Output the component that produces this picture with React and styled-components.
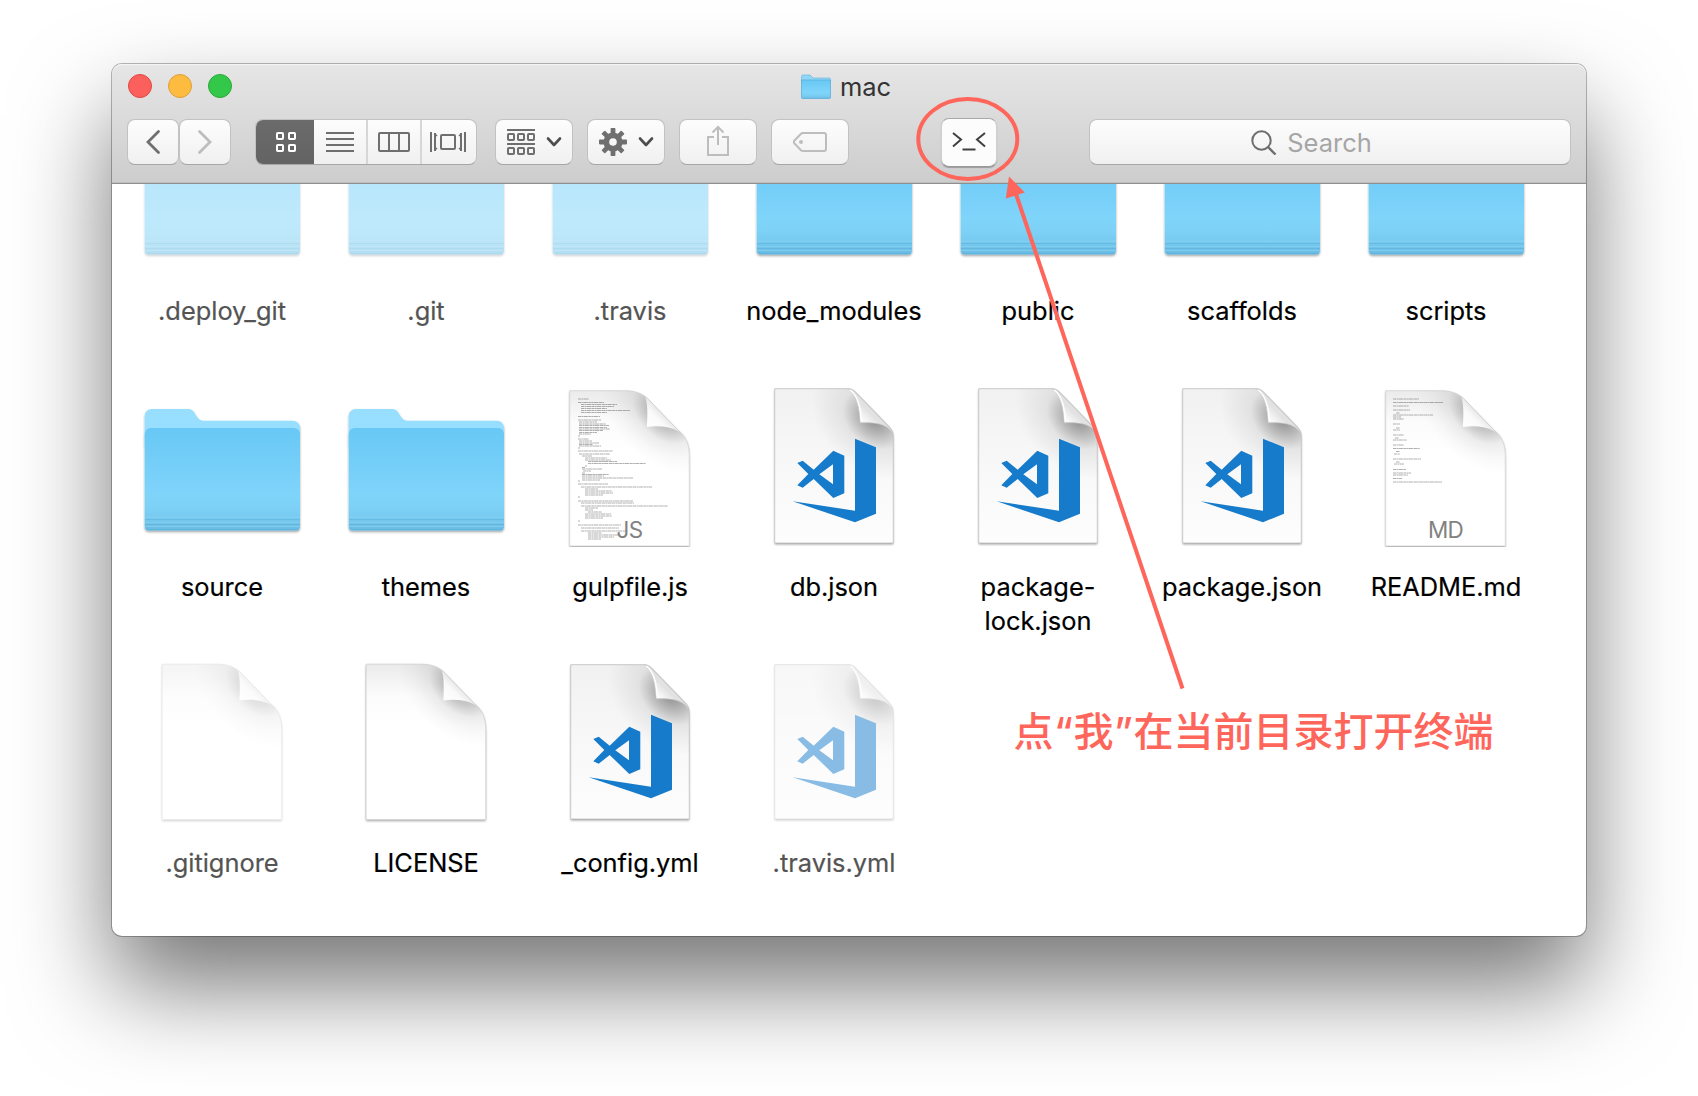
import React from 'react';
import styled, { createGlobalStyle, css } from 'styled-components';

const GlobalStyle = createGlobalStyle`
  body {
    margin: 0;
    background: #fff;
    overflow: hidden;
    font-family: Inter, "Liberation Sans", "Noto Sans CJK SC", sans-serif;
  }
`;

const Desktop = styled.main`
  position: relative;
  box-sizing: border-box;
  width: 1698px;
  height: 1096px;
  padding: 64px 112px 160px;
  overflow: hidden;
  background: #fff;
`;

const Window = styled.section`
  display: flex;
  flex-direction: column;
  height: 872px;
  border-radius: 10px;
  background: #fff;
  box-shadow: 0 0 0 1px rgba(0, 0, 0, 0.27), 0 50px 96px rgba(0, 0, 0, 0.54);
`;

const Header = styled.header`
  box-sizing: border-box;
  flex: none;
  height: 120px;
  border-bottom: 1px solid #8f8f8f;
  border-radius: 10px 10px 0 0;
  background: linear-gradient(#e6e6e6, #cdcdcd);
  box-shadow: inset 0 1px 0 #f4f4f4, inset 0 -1px 0 #bdbdbd;
`;

const TitleBar = styled.div`
  display: grid;
  grid-template-columns: 1fr auto 1fr;
  align-items: center;
  height: 44px;
  padding: 0 22px 0 16px;
`;

const Lights = styled.div`
  display: flex;
  gap: 16px;
`;

const Light = styled.span`
  box-sizing: border-box;
  width: 24px;
  height: 24px;
  border: 1px solid ${(p) => p.$edge};
  border-radius: 50%;
  background: ${(p) => p.$fill};
`;

const Title = styled.h1`
  display: flex;
  align-items: center;
  gap: 9px;
  margin: 0;
  padding-top: 1px;
  font-size: 25.5px;
  font-weight: 400;
  line-height: 30px;
  color: #333;
`;

const Toolbar = styled.div`
  display: flex;
  height: 46px;
  margin-top: 11px;
  padding: 0 15px;
`;

const Group = styled.div`
  display: flex;
  gap: ${(p) => p.$gap || 0}px;
  margin-right: ${(p) => p.$after || 0}px;
`;

const surface = css`
  box-sizing: border-box;
  border: 1px solid #c2c2c2;
  border-bottom-color: #a6a6a6;
  background: linear-gradient(#fdfdfd, #f0f0f0);
`;

const Button = styled.button`
  ${surface}
  display: flex;
  align-items: center;
  justify-content: center;
  gap: 11px;
  width: ${(p) => p.$w}px;
  height: 46px;
  padding: 0;
  border-radius: 8px;
  color: ${(p) => (p.$off ? '#bdbdbd' : '#6f6f6f')};
`;

const Segments = styled.div`
  ${surface}
  display: flex;
  width: 222px;
  height: 46px;
  margin-right: 18px;
  border-radius: 8px;
  overflow: hidden;
`;

const Segment = styled.button`
  display: flex;
  align-items: center;
  justify-content: center;
  box-sizing: border-box;
  flex: 0 0 ${(p) => p.$w}px;
  height: 46px;
  margin: ${(p) => (p.$active ? '-1px 0 0 -1px' : '-1px 0 0')};
  padding: 0 0 0 ${(p) => (p.$active ? 3 : 0)}px;
  border: 0;
  border-left: ${(p) => (p.$divided ? '2px solid #d6d6d6' : '0')};
  background: ${(p) => (p.$active ? 'linear-gradient(#6b6b6b, #636363)' : 'transparent')};
  color: ${(p) => (p.$active ? '#fff' : '#6f6f6f')};
`;

const TerminalButton = styled.button`
  display: flex;
  align-items: center;
  justify-content: center;
  box-sizing: border-box;
  width: 56px;
  height: 49px;
  margin: -1px 92px 0;
  padding: 0 0 4px;
  border: 1px solid #d0d0d0;
  border-top-color: #a8a8a8;
  border-bottom: 1px solid #999;
  border-radius: 8px;
  background: #fcfcfc;
  box-shadow: 0 1px 1px rgba(0, 0, 0, 0.25);
  color: #404040;
`;

const SearchField = styled.div`
  ${surface}
  display: flex;
  align-items: center;
  justify-content: center;
  gap: 10px;
  width: 482px;
  height: 46px;
  padding-right: 37px;
  border-radius: 8px;
  font-size: 25.5px;
  color: #a6a6a6;
`;

const Content = styled.div`
  flex: 1;
  min-height: 0;
  overflow: hidden;
  border-radius: 0 0 10px 10px;
`;

const Files = styled.ul`
  display: grid;
  grid-template-columns: repeat(7, 204px);
  grid-auto-rows: 276px;
  margin: -73px 0 0;
  padding: 0 0 0 8px;
  list-style: none;
`;

const FileItem = styled.li`
  display: flex;
  flex-direction: column;
  align-items: center;
`;

const IconBox = styled.div`
  height: 160px;
  opacity: ${(p) => (p.$dim ? 0.5 : 1)};
`;

const Label = styled.span`
  margin-top: 23px;
  font-size: 25.4px;
  line-height: 34px;
  text-align: center;
  white-space: pre;
  -webkit-text-stroke: 0.2px currentColor;
  color: ${(p) => (p.$dim ? '#545454' : '#000')};
`;

const Markup = styled.svg`
  position: absolute;
  left: 900px;
  top: 80px;
  overflow: visible;
`;

const Note = styled.p`
  position: absolute;
  left: 1013.5px;
  top: 699px;
  margin: 0;
  font-family: "Noto Sans CJK SC", sans-serif;
  font-size: 40px;
  font-weight: 500;
  line-height: 60px;
  white-space: nowrap;
  color: #fe665b;
`;

const Quote = styled.span`
  display: inline-block;
  width: 20px;
  font-family: Inter, sans-serif;
  text-align: center;
`;

const HiddenDefs = styled.svg`
  position: absolute;
`;

const Defs = () => (
  <HiddenDefs width="0" height="0" aria-hidden="true">
    <defs>
      <linearGradient id="folder" x1="0" y1="0" x2="0" y2="1">
        <stop offset="0" stopColor="#68c8f5" />
        <stop offset="0.65" stopColor="#7fd4fa" />
        <stop offset="0.78" stopColor="#7dd1f6" />
        <stop offset="0.9" stopColor="#74c8ed" />
        <stop offset="1" stopColor="#68bae2" />
      </linearGradient>
      <linearGradient id="curl" gradientUnits="userSpaceOnUse" x1="98" y1="40" x2="114" y2="24">
        <stop offset="0" stopColor="#fff" />
        <stop offset="0.55" stopColor="#fafafa" />
        <stop offset="1" stopColor="#e2e2e2" />
      </linearGradient>
      <linearGradient id="sheet" x1="0" y1="0" x2="0" y2="1">
        <stop offset="0" stopColor="#f1f1f1" />
        <stop offset="0.5" stopColor="#f8f8f8" />
        <stop offset="1" stopColor="#fdfdfd" />
      </linearGradient>
      <radialGradient id="shade" gradientUnits="userSpaceOnUse" cx="0" cy="0" r="1" gradientTransform="translate(114 27) rotate(42) scale(72 48)">
        <stop offset="0" stopColor="#000" stopOpacity="0.34" />
        <stop offset="0.3" stopColor="#000" stopOpacity="0.2" />
        <stop offset="0.5" stopColor="#000" stopOpacity="0.07" />
        <stop offset="0.75" stopColor="#000" stopOpacity="0.025" />
        <stop offset="1" stopColor="#000" stopOpacity="0" />
      </radialGradient>
      <radialGradient id="codeShade" gradientUnits="userSpaceOnUse" cx="0" cy="0" r="1" gradientTransform="translate(120 32) rotate(42) scale(70 52)">
        <stop offset="0" stopColor="#000" stopOpacity="0.42" />
        <stop offset="0.27" stopColor="#000" stopOpacity="0.24" />
        <stop offset="0.5" stopColor="#000" stopOpacity="0.07" />
        <stop offset="1" stopColor="#000" stopOpacity="0" />
      </radialGradient>
      <linearGradient id="topShade" x1="0" y1="0" x2="0" y2="1">
        <stop offset="0" stopColor="#000" stopOpacity="0.08" />
        <stop offset="0.2" stopColor="#000" stopOpacity="0.015" />
        <stop offset="0.4" stopColor="#000" stopOpacity="0" />
      </linearGradient>
      <filter id="drop" x="-10%" y="-10%" width="120%" height="120%">
        <feDropShadow dx="0" dy="1.4" stdDeviation="1.3" floodColor="#000" floodOpacity="0.38" />
      </filter>
    </defs>
  </HiddenDefs>
);

const FolderIcon = () => (
  <svg width="160" height="160" viewBox="0 0 160 160">
    <g filter="url(#drop)">
      <path d="M2.700 60V29a7 7 0 0 1 7-7h36c4 0 5.500 1.800 7.500 5s4 6.700 8 6.700H151a7 7 0 0 1 7 7V70z" fill="#98deff" />
      <path d="M2.700 47a6 6 0 0 1 6-6H152a6 6 0 0 1 6 6v92.500a4 4 0 0 1-4 4H6.700a4 4 0 0 1-4-4z" fill="url(#folder)" />
    </g>
    <g strokeWidth="1.2">
      <path d="M3 130.200h155M3 135.500h155M3 139.500h155" stroke="#8dd3f3" opacity=".6" />
      <path d="M3 132.500h155M3 137.500h155M4.500 142.600h152" stroke="#52a9d4" opacity=".4" />
    </g>
  </svg>
);

const SoftSheet = () => {
  const d = 'M19.700 3.700H75c9 0 15.500 2 21.700 7L128 43c7.500 6 11.300 13 11.300 26v90H19.700z';
  return (
    <>
      <path d={d} fill="#fff" filter="url(#drop)" />
      <path d={d} fill="url(#topShade)" />
      <path d={d} fill="url(#shade)" />
      <path d="M95 9c3 8 2.500 18 2 31 12-1.500 23-.5 33 5z" fill="url(#curl)" />
      <path d={d} fill="none" stroke="#c6c6c6" strokeWidth="0.6" />
    </>
  );
};

const PlainIcon = () => (
  <svg width="160" height="160" viewBox="0 0 160 160">
    <g transform="translate(.4 -2.500)"><SoftSheet /></g>
  </svg>
);

/* Preview lines of a text file: [y, indent, width] */
const jsLines = [
  [12, 28, 11], [15.5, 28, 26], [17.5, 31, 36], [19.5, 31, 33], [21.5, 31, 26], [23.5, 31, 49], [25.5, 31, 26],
  [29.5, 28, 22], [33, 28, 23], [35, 29, 18], [37, 29, 27], [38.5, 29, 30], [40.5, 29, 28], [42, 29, 31], [43.5, 29, 24], [45.5, 29, 18], [47, 29, 12], [49, 28, 2],
  [52, 28, 11], [54, 29, 13], [56, 29, 20], [57.5, 29, 14], [59, 29, 22], [61, 28, 2],
  [64, 28, 35], [67, 29, 31], [69, 32, 10], [71, 35, 22], [73, 35, 26], [74.5, 38, 29], [76.5, 38, 58], [79, 35, 2], [80.5, 32, 3], [82, 32, 20], [84, 33, 8], [86, 32, 3],
  [87.5, 32, 27], [89, 32, 22], [91, 32, 51], [93, 32, 18], [94, 28, 2],
  [97, 28, 30], [100, 31, 71], [102, 35, 13], [104, 35, 27], [106, 35, 28], [108, 35, 18], [110, 28, 2],
  [114, 28, 55], [116, 31, 53], [119, 31, 87], [121, 35, 13], [123, 35, 8], [125, 38, 14], [127, 35, 26], [129, 35, 27], [131, 35, 18], [134, 28, 2],
  [138, 28, 43], [141, 31, 38], [144, 31, 45], [146, 38, 14], [148, 38, 30], [150, 38, 26], [152, 38, 13],
];
const mdLines = [
  [12, 27, 26], [15.5, 27, 50], [19, 27, 16], [23, 27, 17], [26, 30, 4], [28, 27, 40], [30, 27, 8], [32, 27, 11], [37, 27, 7],
  [41, 30, 4], [43, 27, 7], [48, 27, 11], [51, 29, 4], [53, 27, 14], [58, 27, 11], [61.5, 27, 27], [64.5, 30, 4], [67, 28, 6],
  [72, 27, 28], [75, 30, 4], [77, 28, 10], [82.5, 27, 13], [86, 27, 18], [88, 27, 15], [91.5, 27, 9], [95, 27, 49],
];

const TextIcon = ({ lines, kind }) => (
  <svg width="160" height="160" viewBox="0 0 160 160">
    <SoftSheet />
    {lines.map(([y, x, w]) => (
      <path key={y} d={`M${x} ${y}h${w}`} stroke="#555" strokeWidth="1" strokeDasharray="3.2 .4 1.7 .3 4.3 .5" opacity=".46" />
    ))}
    <text x="79.500" y="151" textAnchor="middle" fontFamily="Inter, sans-serif" fontSize="22.500" fontWeight="400" letterSpacing="-.7" fill="#828282">{kind}</text>
  </svg>
);

const CodeIcon = () => {
  const d = 'M20.700 1.700H94.300c3 0 5 1.500 7 3.500L136 41c2.500 2.500 3.300 5 3.300 9V156H20.700z';
  return (
    <svg width="160" height="160" viewBox="0 0 160 160" overflow="visible">
      <path d={d} fill="#fff" filter="url(#drop)" />
      <path d={d} fill="url(#sheet)" />
      <path d={d} fill="url(#codeShade)" />
      <path d="M94.300 1.700c8 7 11 17 12 34 12-.5 28 .5 32.500 11-1-4-2-6-5-9L103 6c-3-3-5.500-4.300-8.700-4.300z" fill="url(#curl)" stroke="#cfcfcf" strokeWidth=".6" />
      <path d="M96 2.500c8 7 10.500 17 11.500 32" fill="none" stroke="#fff" strokeWidth="1.4" />
      <path d={d} fill="none" stroke="#bcbcbc" strokeWidth=".8" />
      <g fill="#157bca">
        <path d="M101 51.700l21 8.600v66.400l-21 8.600-62.300-21 62.300 9.400z" />
        <path fillRule="evenodd" d="M43.300 76l5.400-2.300 11 9 19.600-19 11 5v37.600l-11 4.700-19.600-19-11 8.700-5.400-2.400 11-11.300zM79 77.300L65.300 87.300 79 97.300z" />
      </g>
    </svg>
  );
};

const icons = {
  folder: () => <FolderIcon />,
  js: () => <TextIcon lines={jsLines} kind="JS" />,
  md: () => <TextIcon lines={mdLines} kind="MD" />,
  code: () => <CodeIcon />,
  plain: () => <PlainIcon />,
};

const files = [
  { name: '.deploy_git', icon: 'folder', dim: true },
  { name: '.git', icon: 'folder', dim: true },
  { name: '.travis', icon: 'folder', dim: true },
  { name: 'node_modules', icon: 'folder' },
  { name: 'public', icon: 'folder' },
  { name: 'scaffolds', icon: 'folder' },
  { name: 'scripts', icon: 'folder' },
  { name: 'source', icon: 'folder' },
  { name: 'themes', icon: 'folder' },
  { name: 'gulpfile.js', icon: 'js' },
  { name: 'db.json', icon: 'code' },
  { name: 'package-\nlock.json', icon: 'code' },
  { name: 'package.json', icon: 'code' },
  { name: 'README.md', icon: 'md' },
  { name: '.gitignore', icon: 'plain', dim: true },
  { name: 'LICENSE', icon: 'plain' },
  { name: '_config.yml', icon: 'code' },
  { name: '.travis.yml', icon: 'code', dim: true },
];

const Stroke = ({ w, h, sw = 2, children, ...rest }) => (
  <svg width={w} height={h} viewBox={`0 0 ${w} ${h}`} fill="none" stroke="currentColor" strokeWidth={sw} {...rest}>{children}</svg>
);

const Chevron = () => (
  <Stroke w={16} h={12} sw={2.6} color="#4d4d4d" strokeLinecap="round" strokeLinejoin="round"><path d="M2 2.500l6 6.500 6-6.500" /></Stroke>
);

const Gear = () => (
  <svg width="28" height="28" viewBox="-14 -14 28 28" fill="currentColor">
    {[0, 45, 90, 135].map((a) => <rect key={a} x="-2.400" y="-14" width="4.800" height="28" rx=".8" transform={`rotate(${a})`} />)}
    <circle r="9.600" />
    <circle r="3.800" fill="#f7f7f7" />
  </svg>
);

export default function App() {
  return (
    <Desktop>
      <GlobalStyle />
      <Defs />
      <Window>
        <Header>
          <TitleBar>
            <Lights>
              <Light $fill="#fc605c" $edge="#e14640" />
              <Light $fill="#fdbc40" $edge="#df9f34" />
              <Light $fill="#34c84a" $edge="#28a935" />
            </Lights>
            <Title>
              <svg width="30" height="26" viewBox="0 0 30 26">
                <path d="M.5 6V2.500A1.500 1.500 0 0 1 2 1h7l3 3h16.500A1.500 1.500 0 0 1 29.500 5.500V8H.5z" fill="#8fd6f8" stroke="#6db8df" strokeWidth=".7" />
                <path d="M.5 6h29v17.500a1 1 0 0 1-1 1h-27a1 1 0 0 1-1-1z" fill="url(#folder)" stroke="#59a9d2" strokeWidth=".7" />
              </svg>
              mac
            </Title>
          </TitleBar>
          <Toolbar>
            <Group $after={24}>
              <Button $w={52} aria-label="Back"><Stroke w={16} h={26} sw={2.8} strokeLinecap="round"><path d="M13.500 2.500L3 13l10.500 10.500" /></Stroke></Button>
              <Button $w={52} $off aria-label="Forward"><Stroke w={16} h={26} sw={2.8} strokeLinecap="round"><path d="M2.500 2.500L13 13 2.500 23.500" /></Stroke></Button>
            </Group>
            <Segments>
              <Segment $active $w={59} aria-label="Icons">
                <Stroke w={20} h={20}>
                  {[[1, 1], [13, 1], [1, 13], [13, 13]].map(([x, y]) => <rect key={`${x}${y}`} x={x} y={y} width="6" height="6" rx=".8" />)}
                </Stroke>
              </Segment>
              <Segment $w={52} aria-label="List"><Stroke w={28} h={20}><path d="M0 1h28M0 7h28M0 13h28M0 19h28" /></Stroke></Segment>
              <Segment $divided $w={54} aria-label="Columns"><Stroke w={32} h={20}><rect x="1" y="1" width="30" height="18" rx="1" /><path d="M11 1v18M21 1v18" /></Stroke></Segment>
              <Segment $divided $w={54} aria-label="Cover Flow">
                <Stroke w={36} h={20}>
                  <path d="M1 0v20M35 0v20M5 1v18M31 1v18" />
                  <path d="M5 2l2 2M5 18l2-2M31 2l-2 2M31 18l-2-2" strokeWidth="1.5" />
                  <rect x="11" y="3" width="14" height="14" rx="1" />
                </Stroke>
              </Segment>
            </Segments>
            <Group $gap={14}>
              <Button $w={78} aria-label="Arrange">
                <Stroke w={28} h={26}>
                  <path d="M0 1h28M0 15h28" />
                  {[1, 11, 21].map((x) => <React.Fragment key={x}><rect x={x} y="5" width="6" height="6" rx=".8" /><rect x={x} y="19" width="6" height="6" rx=".8" /></React.Fragment>)}
                </Stroke>
                <Chevron />
              </Button>
              <Button $w={78} aria-label="Action"><Gear /><Chevron /></Button>
              <Button $w={78} $off aria-label="Share">
                <Stroke w={22} h={34}><path d="M7 12H1v18h20V12h-6M11 20V2M5.500 7.500L11 2l5.500 5.500" /></Stroke>
              </Button>
              <Button $w={78} $off aria-label="Tags">
                <Stroke w={34} h={20}><path d="M10 1h21a2 2 0 0 1 2 2v14a2 2 0 0 1-2 2H10c-1 0-1.500-.3-2-.8L1.500 11.500c-.7-.8-.7-2.200 0-3L8 1.800C8.500 1.200 9 1 10 1z" /><circle cx="8" cy="10" r="2" fill="currentColor" stroke="none" /></Stroke>
              </Button>
            </Group>
            <TerminalButton aria-label="Open terminal">
              <Stroke w={34} h={20}><path d="M1 2l8 6.500L1 15.500M33 2l-8 6.500 8 7M10.500 18.500h13" /></Stroke>
            </TerminalButton>
            <SearchField>
              <Stroke w={26} h={26} sw={2} color="#6e6e6e"><circle cx="10.500" cy="11.500" r="9.200" /><path d="M17 18l7.500 7.500" strokeWidth="2.400" /></Stroke>
              Search
            </SearchField>
          </Toolbar>
        </Header>
        <Content>
          <Files>
            {files.map((f) => (
              <FileItem key={f.name}>
                <IconBox $dim={f.dim}>{icons[f.icon]()}</IconBox>
                <Label $dim={f.dim}>{f.name}</Label>
              </FileItem>
            ))}
          </Files>
        </Content>
      </Window>
      <Markup width="300" height="620" fill="none" stroke="#fe665b" strokeWidth="4">
        <ellipse cx="67.800" cy="59" rx="49.500" ry="40" />
        <path d="M116 114l166.500 494.500" />
        <path d="M109 96.500l-3.200 22 19-6z" fill="#fe665b" stroke="none" />
      </Markup>
      <Note>点<Quote>“</Quote>我<Quote>”</Quote>在当前目录打开终端</Note>
    </Desktop>
  );
}
